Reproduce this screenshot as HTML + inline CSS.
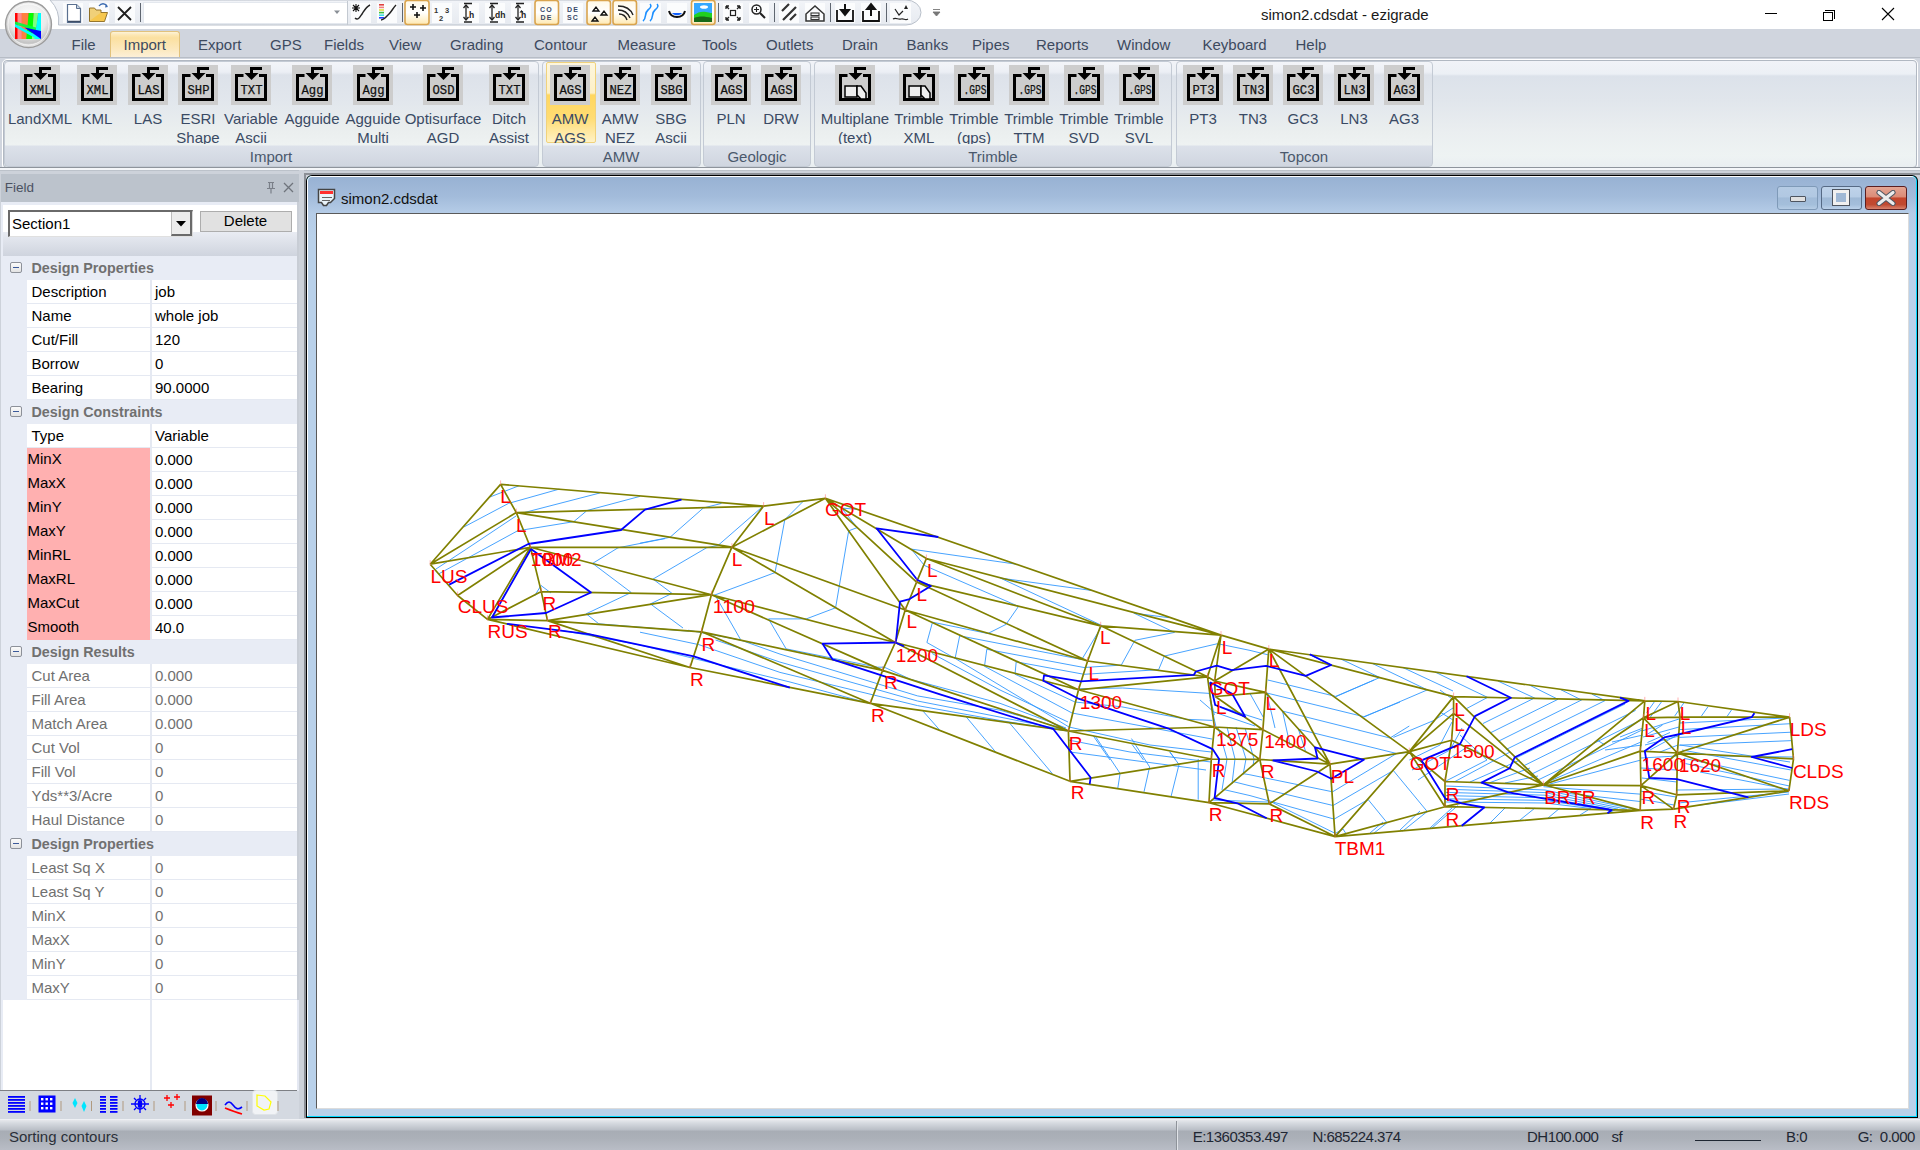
<!DOCTYPE html><html><head><meta charset="utf-8"><style>
*{margin:0;padding:0;box-sizing:border-box}
html,body{width:1920px;height:1150px;overflow:hidden;background:#cfd4dc;font-family:"Liberation Sans",sans-serif}
body{position:relative}
div,span,svg{position:absolute;display:block}
.t{white-space:nowrap;line-height:15px;font-size:15px}
.c{text-align:center}
</style></head><body>
<div style="left:0px;top:0px;width:1920px;height:29px;background:#fff"></div>
<span class="t" style="left:1261px;top:6.8px;color:#1a1a1a;">simon2.cdsdat - ezigrade</span>
<div style="left:1765px;top:13px;width:12px;height:1px;background:#000"></div>
<div style="left:1823px;top:12px;width:10px;height:9px;border:1px solid #000;background:#fff"></div>
<div style="left:1825px;top:10px;width:10px;height:9px;border-top:1px solid #000;border-right:1px solid #000"></div>
<svg style="left:1881px;top:7px" width="14" height="14"><path d="M1 1L13 13M13 1L1 13" stroke="#000" stroke-width="1.1"/></svg>
<div style="left:0px;top:29px;width:1920px;height:29px;background:#d0d5de"></div>
<div style="left:110px;top:31px;width:70px;height:27px;border:1px solid #e2c27c;border-bottom:none;border-radius:3px 3px 0 0;background:linear-gradient(#fdf3d9 0,#fce7b3 3px,#fbe0a0 6px,#fce9c0 18px,#fdf1dc 26px)"></div>
<span class="t" style="left:71.5px;top:37.3px;color:#3d4a5e;">File</span>
<span class="t" style="left:123.5px;top:37.3px;color:#3d4a5e;">Import</span>
<span class="t" style="left:198px;top:37.3px;color:#3d4a5e;">Export</span>
<span class="t" style="left:270px;top:37.3px;color:#3d4a5e;">GPS</span>
<span class="t" style="left:324px;top:37.3px;color:#3d4a5e;">Fields</span>
<span class="t" style="left:389px;top:37.3px;color:#3d4a5e;">View</span>
<span class="t" style="left:450px;top:37.3px;color:#3d4a5e;">Grading</span>
<span class="t" style="left:534px;top:37.3px;color:#3d4a5e;">Contour</span>
<span class="t" style="left:617.5px;top:37.3px;color:#3d4a5e;">Measure</span>
<span class="t" style="left:702px;top:37.3px;color:#3d4a5e;">Tools</span>
<span class="t" style="left:766px;top:37.3px;color:#3d4a5e;">Outlets</span>
<span class="t" style="left:842px;top:37.3px;color:#3d4a5e;">Drain</span>
<span class="t" style="left:906.5px;top:37.3px;color:#3d4a5e;">Banks</span>
<span class="t" style="left:972px;top:37.3px;color:#3d4a5e;">Pipes</span>
<span class="t" style="left:1036px;top:37.3px;color:#3d4a5e;">Reports</span>
<span class="t" style="left:1117px;top:37.3px;color:#3d4a5e;">Window</span>
<span class="t" style="left:1202.5px;top:37.3px;color:#3d4a5e;">Keyboard</span>
<span class="t" style="left:1295.5px;top:37.3px;color:#3d4a5e;">Help</span>
<div style="left:0px;top:57px;width:1920px;height:116px;background:#d0d5de"></div>
<div style="left:0px;top:57px;width:1920px;height:1px;background:#b7bdc6"></div>
<div style="left:2px;top:59px;width:1916px;height:111px;border:1px solid #fff;border-radius:5px;background:#e9edf3"></div>
<div style="left:3px;top:60px;width:1914px;height:108px;border:1px solid #b1b8c2;border-radius:4px;background:linear-gradient(#f1f3f8 0,#ecf0f5 13px,#dce2ea 15px,#e1e6ec 40px,#eaeef0 70px,#eef3f3 95px,#e9eef1 106px)"></div>
<div style="left:4px;top:61px;width:535px;height:106px;border:1px solid #c3cad4;border-radius:4px;background:linear-gradient(#f3f5f9 0,#eceff5 10px,#dde2ea 13px,#e2e7ed 40px,#ebefef 70px,#eef2f2 83px,#dce1ea 84px,#cfd5df 105px)"></div>
<span class="t c" style="left:211.0px;top:149px;width:120px;color:#4a586c;">Import</span>
<div style="left:542px;top:61px;width:159px;height:106px;border:1px solid #c3cad4;border-radius:4px;background:linear-gradient(#f3f5f9 0,#eceff5 10px,#dde2ea 13px,#e2e7ed 40px,#ebefef 70px,#eef2f2 83px,#dce1ea 84px,#cfd5df 105px)"></div>
<span class="t c" style="left:561.0px;top:149px;width:120px;color:#4a586c;">AMW</span>
<div style="left:703px;top:61px;width:108px;height:106px;border:1px solid #c3cad4;border-radius:4px;background:linear-gradient(#f3f5f9 0,#eceff5 10px,#dde2ea 13px,#e2e7ed 40px,#ebefef 70px,#eef2f2 83px,#dce1ea 84px,#cfd5df 105px)"></div>
<span class="t c" style="left:697.0px;top:149px;width:120px;color:#4a586c;">Geologic</span>
<div style="left:814px;top:61px;width:358px;height:106px;border:1px solid #c3cad4;border-radius:4px;background:linear-gradient(#f3f5f9 0,#eceff5 10px,#dde2ea 13px,#e2e7ed 40px,#ebefef 70px,#eef2f2 83px,#dce1ea 84px,#cfd5df 105px)"></div>
<span class="t c" style="left:933.0px;top:149px;width:120px;color:#4a586c;">Trimble</span>
<div style="left:1176px;top:61px;width:257px;height:106px;border:1px solid #c3cad4;border-radius:4px;background:linear-gradient(#f3f5f9 0,#eceff5 10px,#dde2ea 13px,#e2e7ed 40px,#ebefef 70px,#eef2f2 83px,#dce1ea 84px,#cfd5df 105px)"></div>
<span class="t c" style="left:1244.0px;top:149px;width:120px;color:#4a586c;">Topcon</span>
<div style="left:546px;top:62px;width:50px;height:81px;border:1px solid #f0d27c;border-radius:2px;background:linear-gradient(#fdf6de 0,#fdf0c6 30px,#ffd760 32px,#ffdc73 55px,#fff3c9 80px)"></div>
<svg style="left:20px;top:65px" width="40" height="40"><rect width="40" height="40" fill="#cdcdcd"/><path d="M12.5 10.5H5.5V34.5H34.5V10.5H28" fill="none" stroke="#000" stroke-width="3"/><path d="M31 3.5H20.5V9" fill="none" stroke="#000" stroke-width="3"/><path d="M13.5 8H27.5L20.5 15z" fill="#000"/><text x="9.5" y="28.5" font-family="Liberation Mono" font-size="13" textLength="22" lengthAdjust="spacingAndGlyphs" fill="#111" stroke="#111" stroke-width="0.25">XML</text></svg>
<span class="t c" style="left:-20.0px;top:111px;width:120px;color:#3a4a64;">LandXML</span>
<svg style="left:77px;top:65px" width="40" height="40"><rect width="40" height="40" fill="#cdcdcd"/><path d="M12.5 10.5H5.5V34.5H34.5V10.5H28" fill="none" stroke="#000" stroke-width="3"/><path d="M31 3.5H20.5V9" fill="none" stroke="#000" stroke-width="3"/><path d="M13.5 8H27.5L20.5 15z" fill="#000"/><text x="9.5" y="28.5" font-family="Liberation Mono" font-size="13" textLength="22" lengthAdjust="spacingAndGlyphs" fill="#111" stroke="#111" stroke-width="0.25">XML</text></svg>
<span class="t c" style="left:37.0px;top:111px;width:120px;color:#3a4a64;">KML</span>
<svg style="left:128px;top:65px" width="40" height="40"><rect width="40" height="40" fill="#cdcdcd"/><path d="M12.5 10.5H5.5V34.5H34.5V10.5H28" fill="none" stroke="#000" stroke-width="3"/><path d="M31 3.5H20.5V9" fill="none" stroke="#000" stroke-width="3"/><path d="M13.5 8H27.5L20.5 15z" fill="#000"/><text x="9.5" y="28.5" font-family="Liberation Mono" font-size="13" textLength="22" lengthAdjust="spacingAndGlyphs" fill="#111" stroke="#111" stroke-width="0.25">LAS</text></svg>
<span class="t c" style="left:88.0px;top:111px;width:120px;color:#3a4a64;">LAS</span>
<svg style="left:178px;top:65px" width="40" height="40"><rect width="40" height="40" fill="#cdcdcd"/><path d="M12.5 10.5H5.5V34.5H34.5V10.5H28" fill="none" stroke="#000" stroke-width="3"/><path d="M31 3.5H20.5V9" fill="none" stroke="#000" stroke-width="3"/><path d="M13.5 8H27.5L20.5 15z" fill="#000"/><text x="9.5" y="28.5" font-family="Liberation Mono" font-size="13" textLength="22" lengthAdjust="spacingAndGlyphs" fill="#111" stroke="#111" stroke-width="0.25">SHP</text></svg>
<span class="t c" style="left:138.0px;top:111px;width:120px;color:#3a4a64;">ESRI</span>
<div style="left:138px;top:125px;width:120px;height:19px;overflow:hidden"><span class="t c" style="left:0;top:5.3px;width:120px;color:#3a4a64">Shape</span></div>
<svg style="left:231px;top:65px" width="40" height="40"><rect width="40" height="40" fill="#cdcdcd"/><path d="M12.5 10.5H5.5V34.5H34.5V10.5H28" fill="none" stroke="#000" stroke-width="3"/><path d="M31 3.5H20.5V9" fill="none" stroke="#000" stroke-width="3"/><path d="M13.5 8H27.5L20.5 15z" fill="#000"/><text x="9.5" y="28.5" font-family="Liberation Mono" font-size="13" textLength="22" lengthAdjust="spacingAndGlyphs" fill="#111" stroke="#111" stroke-width="0.25">TXT</text></svg>
<span class="t c" style="left:191.0px;top:111px;width:120px;color:#3a4a64;">Variable</span>
<div style="left:191px;top:125px;width:120px;height:19px;overflow:hidden"><span class="t c" style="left:0;top:5.3px;width:120px;color:#3a4a64">Ascii</span></div>
<svg style="left:292px;top:65px" width="40" height="40"><rect width="40" height="40" fill="#cdcdcd"/><path d="M12.5 10.5H5.5V34.5H34.5V10.5H28" fill="none" stroke="#000" stroke-width="3"/><path d="M31 3.5H20.5V9" fill="none" stroke="#000" stroke-width="3"/><path d="M13.5 8H27.5L20.5 15z" fill="#000"/><text x="9.5" y="28.5" font-family="Liberation Mono" font-size="13" textLength="22" lengthAdjust="spacingAndGlyphs" fill="#111" stroke="#111" stroke-width="0.25">Agg</text></svg>
<span class="t c" style="left:252.0px;top:111px;width:120px;color:#3a4a64;">Agguide</span>
<svg style="left:353px;top:65px" width="40" height="40"><rect width="40" height="40" fill="#cdcdcd"/><path d="M12.5 10.5H5.5V34.5H34.5V10.5H28" fill="none" stroke="#000" stroke-width="3"/><path d="M31 3.5H20.5V9" fill="none" stroke="#000" stroke-width="3"/><path d="M13.5 8H27.5L20.5 15z" fill="#000"/><text x="9.5" y="28.5" font-family="Liberation Mono" font-size="13" textLength="22" lengthAdjust="spacingAndGlyphs" fill="#111" stroke="#111" stroke-width="0.25">Agg</text></svg>
<span class="t c" style="left:313.0px;top:111px;width:120px;color:#3a4a64;">Agguide</span>
<div style="left:313px;top:125px;width:120px;height:19px;overflow:hidden"><span class="t c" style="left:0;top:5.3px;width:120px;color:#3a4a64">Multi</span></div>
<svg style="left:423px;top:65px" width="40" height="40"><rect width="40" height="40" fill="#cdcdcd"/><path d="M12.5 10.5H5.5V34.5H34.5V10.5H28" fill="none" stroke="#000" stroke-width="3"/><path d="M31 3.5H20.5V9" fill="none" stroke="#000" stroke-width="3"/><path d="M13.5 8H27.5L20.5 15z" fill="#000"/><text x="9.5" y="28.5" font-family="Liberation Mono" font-size="13" textLength="22" lengthAdjust="spacingAndGlyphs" fill="#111" stroke="#111" stroke-width="0.25">OSD</text></svg>
<span class="t c" style="left:383.0px;top:111px;width:120px;color:#3a4a64;">Optisurface</span>
<div style="left:383px;top:125px;width:120px;height:19px;overflow:hidden"><span class="t c" style="left:0;top:5.3px;width:120px;color:#3a4a64">AGD</span></div>
<svg style="left:489px;top:65px" width="40" height="40"><rect width="40" height="40" fill="#cdcdcd"/><path d="M12.5 10.5H5.5V34.5H34.5V10.5H28" fill="none" stroke="#000" stroke-width="3"/><path d="M31 3.5H20.5V9" fill="none" stroke="#000" stroke-width="3"/><path d="M13.5 8H27.5L20.5 15z" fill="#000"/><text x="9.5" y="28.5" font-family="Liberation Mono" font-size="13" textLength="22" lengthAdjust="spacingAndGlyphs" fill="#111" stroke="#111" stroke-width="0.25">TXT</text></svg>
<span class="t c" style="left:449.0px;top:111px;width:120px;color:#3a4a64;">Ditch</span>
<div style="left:449px;top:125px;width:120px;height:19px;overflow:hidden"><span class="t c" style="left:0;top:5.3px;width:120px;color:#3a4a64">Assist</span></div>
<svg style="left:550px;top:65px" width="40" height="40"><rect width="40" height="40" fill="#cdcdcd"/><path d="M12.5 10.5H5.5V34.5H34.5V10.5H28" fill="none" stroke="#000" stroke-width="3"/><path d="M31 3.5H20.5V9" fill="none" stroke="#000" stroke-width="3"/><path d="M13.5 8H27.5L20.5 15z" fill="#000"/><text x="9.5" y="28.5" font-family="Liberation Mono" font-size="13" textLength="22" lengthAdjust="spacingAndGlyphs" fill="#111" stroke="#111" stroke-width="0.25">AGS</text></svg>
<span class="t c" style="left:510.0px;top:111px;width:120px;color:#3a4a64;">AMW</span>
<div style="left:510px;top:125px;width:120px;height:19px;overflow:hidden"><span class="t c" style="left:0;top:5.3px;width:120px;color:#3a4a64">AGS</span></div>
<svg style="left:600px;top:65px" width="40" height="40"><rect width="40" height="40" fill="#cdcdcd"/><path d="M12.5 10.5H5.5V34.5H34.5V10.5H28" fill="none" stroke="#000" stroke-width="3"/><path d="M31 3.5H20.5V9" fill="none" stroke="#000" stroke-width="3"/><path d="M13.5 8H27.5L20.5 15z" fill="#000"/><text x="9.5" y="28.5" font-family="Liberation Mono" font-size="13" textLength="22" lengthAdjust="spacingAndGlyphs" fill="#111" stroke="#111" stroke-width="0.25">NEZ</text></svg>
<span class="t c" style="left:560.0px;top:111px;width:120px;color:#3a4a64;">AMW</span>
<div style="left:560px;top:125px;width:120px;height:19px;overflow:hidden"><span class="t c" style="left:0;top:5.3px;width:120px;color:#3a4a64">NEZ</span></div>
<svg style="left:651px;top:65px" width="40" height="40"><rect width="40" height="40" fill="#cdcdcd"/><path d="M12.5 10.5H5.5V34.5H34.5V10.5H28" fill="none" stroke="#000" stroke-width="3"/><path d="M31 3.5H20.5V9" fill="none" stroke="#000" stroke-width="3"/><path d="M13.5 8H27.5L20.5 15z" fill="#000"/><text x="9.5" y="28.5" font-family="Liberation Mono" font-size="13" textLength="22" lengthAdjust="spacingAndGlyphs" fill="#111" stroke="#111" stroke-width="0.25">SBG</text></svg>
<span class="t c" style="left:611.0px;top:111px;width:120px;color:#3a4a64;">SBG</span>
<div style="left:611px;top:125px;width:120px;height:19px;overflow:hidden"><span class="t c" style="left:0;top:5.3px;width:120px;color:#3a4a64">Ascii</span></div>
<svg style="left:711px;top:65px" width="40" height="40"><rect width="40" height="40" fill="#cdcdcd"/><path d="M12.5 10.5H5.5V34.5H34.5V10.5H28" fill="none" stroke="#000" stroke-width="3"/><path d="M31 3.5H20.5V9" fill="none" stroke="#000" stroke-width="3"/><path d="M13.5 8H27.5L20.5 15z" fill="#000"/><text x="9.5" y="28.5" font-family="Liberation Mono" font-size="13" textLength="22" lengthAdjust="spacingAndGlyphs" fill="#111" stroke="#111" stroke-width="0.25">AGS</text></svg>
<span class="t c" style="left:671.0px;top:111px;width:120px;color:#3a4a64;">PLN</span>
<svg style="left:761px;top:65px" width="40" height="40"><rect width="40" height="40" fill="#cdcdcd"/><path d="M12.5 10.5H5.5V34.5H34.5V10.5H28" fill="none" stroke="#000" stroke-width="3"/><path d="M31 3.5H20.5V9" fill="none" stroke="#000" stroke-width="3"/><path d="M13.5 8H27.5L20.5 15z" fill="#000"/><text x="9.5" y="28.5" font-family="Liberation Mono" font-size="13" textLength="22" lengthAdjust="spacingAndGlyphs" fill="#111" stroke="#111" stroke-width="0.25">AGS</text></svg>
<span class="t c" style="left:721.0px;top:111px;width:120px;color:#3a4a64;">DRW</span>
<svg style="left:835px;top:65px" width="40" height="40"><rect width="40" height="40" fill="#cdcdcd"/><path d="M12.5 10.5H5.5V34.5H34.5V10.5H28" fill="none" stroke="#000" stroke-width="3"/><path d="M31 3.5H20.5V9" fill="none" stroke="#000" stroke-width="3"/><path d="M13.5 8H27.5L20.5 15z" fill="#000"/><path d="M10 21h12v11h-12z" fill="#eee" stroke="#000" stroke-width="1.5"/><path d="M22 21l4 0 5 7v6h-5l-4-4z" fill="#eee" stroke="#000" stroke-width="1.5"/></svg>
<span class="t c" style="left:795.0px;top:111px;width:120px;color:#3a4a64;">Multiplane</span>
<div style="left:795px;top:125px;width:120px;height:19px;overflow:hidden"><span class="t c" style="left:0;top:5.3px;width:120px;color:#3a4a64">(text)</span></div>
<svg style="left:899px;top:65px" width="40" height="40"><rect width="40" height="40" fill="#cdcdcd"/><path d="M12.5 10.5H5.5V34.5H34.5V10.5H28" fill="none" stroke="#000" stroke-width="3"/><path d="M31 3.5H20.5V9" fill="none" stroke="#000" stroke-width="3"/><path d="M13.5 8H27.5L20.5 15z" fill="#000"/><path d="M10 21h12v11h-12z" fill="#eee" stroke="#000" stroke-width="1.5"/><path d="M22 21l4 0 5 7v6h-5l-4-4z" fill="#eee" stroke="#000" stroke-width="1.5"/></svg>
<span class="t c" style="left:859.0px;top:111px;width:120px;color:#3a4a64;">Trimble</span>
<div style="left:859px;top:125px;width:120px;height:19px;overflow:hidden"><span class="t c" style="left:0;top:5.3px;width:120px;color:#3a4a64">XML</span></div>
<svg style="left:954px;top:65px" width="40" height="40"><rect width="40" height="40" fill="#cdcdcd"/><path d="M12.5 10.5H5.5V34.5H34.5V10.5H28" fill="none" stroke="#000" stroke-width="3"/><path d="M31 3.5H20.5V9" fill="none" stroke="#000" stroke-width="3"/><path d="M13.5 8H27.5L20.5 15z" fill="#000"/><text x="9.5" y="28.5" font-family="Liberation Mono" font-size="13" textLength="23" lengthAdjust="spacingAndGlyphs" fill="#111" stroke="#111" stroke-width="0.25">.GPS</text></svg>
<span class="t c" style="left:914.0px;top:111px;width:120px;color:#3a4a64;">Trimble</span>
<div style="left:914px;top:125px;width:120px;height:19px;overflow:hidden"><span class="t c" style="left:0;top:5.3px;width:120px;color:#3a4a64">(gps)</span></div>
<svg style="left:1009px;top:65px" width="40" height="40"><rect width="40" height="40" fill="#cdcdcd"/><path d="M12.5 10.5H5.5V34.5H34.5V10.5H28" fill="none" stroke="#000" stroke-width="3"/><path d="M31 3.5H20.5V9" fill="none" stroke="#000" stroke-width="3"/><path d="M13.5 8H27.5L20.5 15z" fill="#000"/><text x="9.5" y="28.5" font-family="Liberation Mono" font-size="13" textLength="23" lengthAdjust="spacingAndGlyphs" fill="#111" stroke="#111" stroke-width="0.25">.GPS</text></svg>
<span class="t c" style="left:969.0px;top:111px;width:120px;color:#3a4a64;">Trimble</span>
<div style="left:969px;top:125px;width:120px;height:19px;overflow:hidden"><span class="t c" style="left:0;top:5.3px;width:120px;color:#3a4a64">TTM</span></div>
<svg style="left:1064px;top:65px" width="40" height="40"><rect width="40" height="40" fill="#cdcdcd"/><path d="M12.5 10.5H5.5V34.5H34.5V10.5H28" fill="none" stroke="#000" stroke-width="3"/><path d="M31 3.5H20.5V9" fill="none" stroke="#000" stroke-width="3"/><path d="M13.5 8H27.5L20.5 15z" fill="#000"/><text x="9.5" y="28.5" font-family="Liberation Mono" font-size="13" textLength="23" lengthAdjust="spacingAndGlyphs" fill="#111" stroke="#111" stroke-width="0.25">.GPS</text></svg>
<span class="t c" style="left:1024.0px;top:111px;width:120px;color:#3a4a64;">Trimble</span>
<div style="left:1024px;top:125px;width:120px;height:19px;overflow:hidden"><span class="t c" style="left:0;top:5.3px;width:120px;color:#3a4a64">SVD</span></div>
<svg style="left:1119px;top:65px" width="40" height="40"><rect width="40" height="40" fill="#cdcdcd"/><path d="M12.5 10.5H5.5V34.5H34.5V10.5H28" fill="none" stroke="#000" stroke-width="3"/><path d="M31 3.5H20.5V9" fill="none" stroke="#000" stroke-width="3"/><path d="M13.5 8H27.5L20.5 15z" fill="#000"/><text x="9.5" y="28.5" font-family="Liberation Mono" font-size="13" textLength="23" lengthAdjust="spacingAndGlyphs" fill="#111" stroke="#111" stroke-width="0.25">.GPS</text></svg>
<span class="t c" style="left:1079.0px;top:111px;width:120px;color:#3a4a64;">Trimble</span>
<div style="left:1079px;top:125px;width:120px;height:19px;overflow:hidden"><span class="t c" style="left:0;top:5.3px;width:120px;color:#3a4a64">SVL</span></div>
<svg style="left:1183px;top:65px" width="40" height="40"><rect width="40" height="40" fill="#cdcdcd"/><path d="M12.5 10.5H5.5V34.5H34.5V10.5H28" fill="none" stroke="#000" stroke-width="3"/><path d="M31 3.5H20.5V9" fill="none" stroke="#000" stroke-width="3"/><path d="M13.5 8H27.5L20.5 15z" fill="#000"/><text x="9.5" y="28.5" font-family="Liberation Mono" font-size="13" textLength="22" lengthAdjust="spacingAndGlyphs" fill="#111" stroke="#111" stroke-width="0.25">PT3</text></svg>
<span class="t c" style="left:1143.0px;top:111px;width:120px;color:#3a4a64;">PT3</span>
<svg style="left:1233px;top:65px" width="40" height="40"><rect width="40" height="40" fill="#cdcdcd"/><path d="M12.5 10.5H5.5V34.5H34.5V10.5H28" fill="none" stroke="#000" stroke-width="3"/><path d="M31 3.5H20.5V9" fill="none" stroke="#000" stroke-width="3"/><path d="M13.5 8H27.5L20.5 15z" fill="#000"/><text x="9.5" y="28.5" font-family="Liberation Mono" font-size="13" textLength="22" lengthAdjust="spacingAndGlyphs" fill="#111" stroke="#111" stroke-width="0.25">TN3</text></svg>
<span class="t c" style="left:1193.0px;top:111px;width:120px;color:#3a4a64;">TN3</span>
<svg style="left:1283px;top:65px" width="40" height="40"><rect width="40" height="40" fill="#cdcdcd"/><path d="M12.5 10.5H5.5V34.5H34.5V10.5H28" fill="none" stroke="#000" stroke-width="3"/><path d="M31 3.5H20.5V9" fill="none" stroke="#000" stroke-width="3"/><path d="M13.5 8H27.5L20.5 15z" fill="#000"/><text x="9.5" y="28.5" font-family="Liberation Mono" font-size="13" textLength="22" lengthAdjust="spacingAndGlyphs" fill="#111" stroke="#111" stroke-width="0.25">GC3</text></svg>
<span class="t c" style="left:1243.0px;top:111px;width:120px;color:#3a4a64;">GC3</span>
<svg style="left:1334px;top:65px" width="40" height="40"><rect width="40" height="40" fill="#cdcdcd"/><path d="M12.5 10.5H5.5V34.5H34.5V10.5H28" fill="none" stroke="#000" stroke-width="3"/><path d="M31 3.5H20.5V9" fill="none" stroke="#000" stroke-width="3"/><path d="M13.5 8H27.5L20.5 15z" fill="#000"/><text x="9.5" y="28.5" font-family="Liberation Mono" font-size="13" textLength="22" lengthAdjust="spacingAndGlyphs" fill="#111" stroke="#111" stroke-width="0.25">LN3</text></svg>
<span class="t c" style="left:1294.0px;top:111px;width:120px;color:#3a4a64;">LN3</span>
<svg style="left:1384px;top:65px" width="40" height="40"><rect width="40" height="40" fill="#cdcdcd"/><path d="M12.5 10.5H5.5V34.5H34.5V10.5H28" fill="none" stroke="#000" stroke-width="3"/><path d="M31 3.5H20.5V9" fill="none" stroke="#000" stroke-width="3"/><path d="M13.5 8H27.5L20.5 15z" fill="#000"/><text x="9.5" y="28.5" font-family="Liberation Mono" font-size="13" textLength="22" lengthAdjust="spacingAndGlyphs" fill="#111" stroke="#111" stroke-width="0.25">AG3</text></svg>
<span class="t c" style="left:1344.0px;top:111px;width:120px;color:#3a4a64;">AG3</span>
<div style="left:0px;top:170px;width:1920px;height:950px;background:#cdd2da"></div>
<div style="left:0px;top:167px;width:1920px;height:1px;background:#8e949c"></div>
<div style="left:0px;top:168px;width:1920px;height:2px;background:#f4f6f9"></div>
<div style="left:0px;top:170px;width:1920px;height:1px;background:#bcc2ca"></div>
<div style="left:1px;top:174px;width:299px;height:28px;background:#bcc3cc;border-right:1px solid #e9ecf1"></div>
<span class="t" style="left:4.7px;top:179.6px;color:#4b5262;font-size:13.5px">Field</span>
<svg style="left:262px;top:180px" width="34" height="16"><path d="M6 2.5h6M7.5 2.5v6M10.5 2.5v6M5 8.5h8M9 8.5v5" stroke="#7a7f88" stroke-width="1.2" fill="none"/><path d="M22 3l9 9M31 3l-9 9" stroke="#6f747c" stroke-width="1.3"/></svg>
<div style="left:1px;top:202px;width:298px;height:888px;background:#e8ecf5;border-right:1px solid #c5cad3"></div>
<div style="left:3px;top:204.5px;width:294px;height:28px;background:#fff"></div>
<div style="left:3px;top:232px;width:294px;height:24px;background:linear-gradient(#e9ecf3,#cfd4de)"></div>
<div style="left:8px;top:210px;width:185px;height:27px;background:#fff;border-top:2px solid #6a6a6a;border-left:2px solid #6a6a6a;border-right:1px solid #d8d8d8;border-bottom:1px solid #e0e0e0"></div>
<span class="t" style="left:12px;top:216px;color:#000;">Section1</span>
<div style="left:171px;top:212px;width:21px;height:24px;background:#ececec;border-left:1px solid #bcbcbc;border-right:2px solid #6a6a6a;border-bottom:2px solid #6a6a6a"></div>
<svg style="left:175px;top:220px" width="12" height="8"><path d="M1 1h10L6 6.5z" fill="#000"/></svg>
<div style="left:199.5px;top:210.5px;width:92px;height:21px;background:#e1e1e1;border:1px solid #adadad"></div>
<span class="t c" style="left:185.5px;top:213.2px;width:120px;color:#000;">Delete</span>
<div style="left:3px;top:256px;width:294px;height:24px;background:#e8ecf5"></div>
<div style="left:10px;top:262px;width:12px;height:11px;border:1px solid #8d9199;border-radius:2px;background:linear-gradient(#fbfbfb,#e3e3e3)"></div>
<div style="left:13px;top:267px;width:6px;height:1.2px;background:#3c5a9a"></div>
<span class="t" style="left:31.5px;top:260.6px;color:#707070;font-weight:bold;font-size:14.3px">Design Properties</span>
<div style="left:27px;top:280px;width:270px;height:24px;background:#fff;border-bottom:1px solid #e5e9f2"></div>
<div style="left:150px;top:280px;width:2px;height:24px;background:#e5e9f2"></div>
<span class="t" style="left:31.5px;top:284.3px;color:#000;">Description</span>
<span class="t" style="left:155px;top:284.3px;color:#000;">job</span>
<div style="left:27px;top:304px;width:270px;height:24px;background:#fff;border-bottom:1px solid #e5e9f2"></div>
<div style="left:150px;top:304px;width:2px;height:24px;background:#e5e9f2"></div>
<span class="t" style="left:31.5px;top:308.3px;color:#000;">Name</span>
<span class="t" style="left:155px;top:308.3px;color:#000;">whole job</span>
<div style="left:27px;top:328px;width:270px;height:24px;background:#fff;border-bottom:1px solid #e5e9f2"></div>
<div style="left:150px;top:328px;width:2px;height:24px;background:#e5e9f2"></div>
<span class="t" style="left:31.5px;top:332.3px;color:#000;">Cut/Fill</span>
<span class="t" style="left:155px;top:332.3px;color:#000;">120</span>
<div style="left:27px;top:352px;width:270px;height:24px;background:#fff;border-bottom:1px solid #e5e9f2"></div>
<div style="left:150px;top:352px;width:2px;height:24px;background:#e5e9f2"></div>
<span class="t" style="left:31.5px;top:356.3px;color:#000;">Borrow</span>
<span class="t" style="left:155px;top:356.3px;color:#000;">0</span>
<div style="left:27px;top:376px;width:270px;height:24px;background:#fff;border-bottom:1px solid #e5e9f2"></div>
<div style="left:150px;top:376px;width:2px;height:24px;background:#e5e9f2"></div>
<span class="t" style="left:31.5px;top:380.3px;color:#000;">Bearing</span>
<span class="t" style="left:155px;top:380.3px;color:#000;">90.0000</span>
<div style="left:3px;top:400px;width:294px;height:24px;background:#e8ecf5"></div>
<div style="left:10px;top:406px;width:12px;height:11px;border:1px solid #8d9199;border-radius:2px;background:linear-gradient(#fbfbfb,#e3e3e3)"></div>
<div style="left:13px;top:411px;width:6px;height:1.2px;background:#3c5a9a"></div>
<span class="t" style="left:31.5px;top:404.6px;color:#707070;font-weight:bold;font-size:14.3px">Design Constraints</span>
<div style="left:27px;top:424px;width:270px;height:24px;background:#fff;border-bottom:1px solid #e5e9f2"></div>
<div style="left:150px;top:424px;width:2px;height:24px;background:#e5e9f2"></div>
<span class="t" style="left:31.5px;top:428.3px;color:#000;">Type</span>
<span class="t" style="left:155px;top:428.3px;color:#000;">Variable</span>
<div style="left:27px;top:448px;width:270px;height:24px;background:#fff;border-bottom:1px solid #e5e9f2"></div>
<div style="left:150px;top:448px;width:2px;height:24px;background:#e5e9f2"></div>
<div style="left:27px;top:448px;width:123px;height:24px;background:#ffb0b0"></div>
<span class="t" style="left:27.5px;top:450.7px;color:#000;">MinX</span>
<span class="t" style="left:155px;top:452.3px;color:#000;">0.000</span>
<div style="left:27px;top:472px;width:270px;height:24px;background:#fff;border-bottom:1px solid #e5e9f2"></div>
<div style="left:150px;top:472px;width:2px;height:24px;background:#e5e9f2"></div>
<div style="left:27px;top:472px;width:123px;height:24px;background:#ffb0b0"></div>
<span class="t" style="left:27.5px;top:474.7px;color:#000;">MaxX</span>
<span class="t" style="left:155px;top:476.3px;color:#000;">0.000</span>
<div style="left:27px;top:496px;width:270px;height:24px;background:#fff;border-bottom:1px solid #e5e9f2"></div>
<div style="left:150px;top:496px;width:2px;height:24px;background:#e5e9f2"></div>
<div style="left:27px;top:496px;width:123px;height:24px;background:#ffb0b0"></div>
<span class="t" style="left:27.5px;top:498.7px;color:#000;">MinY</span>
<span class="t" style="left:155px;top:500.3px;color:#000;">0.000</span>
<div style="left:27px;top:520px;width:270px;height:24px;background:#fff;border-bottom:1px solid #e5e9f2"></div>
<div style="left:150px;top:520px;width:2px;height:24px;background:#e5e9f2"></div>
<div style="left:27px;top:520px;width:123px;height:24px;background:#ffb0b0"></div>
<span class="t" style="left:27.5px;top:522.7px;color:#000;">MaxY</span>
<span class="t" style="left:155px;top:524.3px;color:#000;">0.000</span>
<div style="left:27px;top:544px;width:270px;height:24px;background:#fff;border-bottom:1px solid #e5e9f2"></div>
<div style="left:150px;top:544px;width:2px;height:24px;background:#e5e9f2"></div>
<div style="left:27px;top:544px;width:123px;height:24px;background:#ffb0b0"></div>
<span class="t" style="left:27.5px;top:546.7px;color:#000;">MinRL</span>
<span class="t" style="left:155px;top:548.3px;color:#000;">0.000</span>
<div style="left:27px;top:568px;width:270px;height:24px;background:#fff;border-bottom:1px solid #e5e9f2"></div>
<div style="left:150px;top:568px;width:2px;height:24px;background:#e5e9f2"></div>
<div style="left:27px;top:568px;width:123px;height:24px;background:#ffb0b0"></div>
<span class="t" style="left:27.5px;top:570.7px;color:#000;">MaxRL</span>
<span class="t" style="left:155px;top:572.3px;color:#000;">0.000</span>
<div style="left:27px;top:592px;width:270px;height:24px;background:#fff;border-bottom:1px solid #e5e9f2"></div>
<div style="left:150px;top:592px;width:2px;height:24px;background:#e5e9f2"></div>
<div style="left:27px;top:592px;width:123px;height:24px;background:#ffb0b0"></div>
<span class="t" style="left:27.5px;top:594.7px;color:#000;">MaxCut</span>
<span class="t" style="left:155px;top:596.3px;color:#000;">0.000</span>
<div style="left:27px;top:616px;width:270px;height:24px;background:#fff;border-bottom:1px solid #e5e9f2"></div>
<div style="left:150px;top:616px;width:2px;height:24px;background:#e5e9f2"></div>
<div style="left:27px;top:616px;width:123px;height:24px;background:#ffb0b0"></div>
<span class="t" style="left:27.5px;top:618.7px;color:#000;">Smooth</span>
<span class="t" style="left:155px;top:620.3px;color:#000;">40.0</span>
<div style="left:3px;top:640px;width:294px;height:24px;background:#e8ecf5"></div>
<div style="left:10px;top:646px;width:12px;height:11px;border:1px solid #8d9199;border-radius:2px;background:linear-gradient(#fbfbfb,#e3e3e3)"></div>
<div style="left:13px;top:651px;width:6px;height:1.2px;background:#3c5a9a"></div>
<span class="t" style="left:31.5px;top:644.6px;color:#707070;font-weight:bold;font-size:14.3px">Design Results</span>
<div style="left:27px;top:664px;width:270px;height:24px;background:#fff;border-bottom:1px solid #e5e9f2"></div>
<div style="left:150px;top:664px;width:2px;height:24px;background:#e5e9f2"></div>
<span class="t" style="left:31.5px;top:668.3px;color:#707070;">Cut Area</span>
<span class="t" style="left:155px;top:668.3px;color:#707070;">0.000</span>
<div style="left:27px;top:688px;width:270px;height:24px;background:#fff;border-bottom:1px solid #e5e9f2"></div>
<div style="left:150px;top:688px;width:2px;height:24px;background:#e5e9f2"></div>
<span class="t" style="left:31.5px;top:692.3px;color:#707070;">Fill Area</span>
<span class="t" style="left:155px;top:692.3px;color:#707070;">0.000</span>
<div style="left:27px;top:712px;width:270px;height:24px;background:#fff;border-bottom:1px solid #e5e9f2"></div>
<div style="left:150px;top:712px;width:2px;height:24px;background:#e5e9f2"></div>
<span class="t" style="left:31.5px;top:716.3px;color:#707070;">Match Area</span>
<span class="t" style="left:155px;top:716.3px;color:#707070;">0.000</span>
<div style="left:27px;top:736px;width:270px;height:24px;background:#fff;border-bottom:1px solid #e5e9f2"></div>
<div style="left:150px;top:736px;width:2px;height:24px;background:#e5e9f2"></div>
<span class="t" style="left:31.5px;top:740.3px;color:#707070;">Cut Vol</span>
<span class="t" style="left:155px;top:740.3px;color:#707070;">0</span>
<div style="left:27px;top:760px;width:270px;height:24px;background:#fff;border-bottom:1px solid #e5e9f2"></div>
<div style="left:150px;top:760px;width:2px;height:24px;background:#e5e9f2"></div>
<span class="t" style="left:31.5px;top:764.3px;color:#707070;">Fill Vol</span>
<span class="t" style="left:155px;top:764.3px;color:#707070;">0</span>
<div style="left:27px;top:784px;width:270px;height:24px;background:#fff;border-bottom:1px solid #e5e9f2"></div>
<div style="left:150px;top:784px;width:2px;height:24px;background:#e5e9f2"></div>
<span class="t" style="left:31.5px;top:788.3px;color:#707070;">Yds**3/Acre</span>
<span class="t" style="left:155px;top:788.3px;color:#707070;">0</span>
<div style="left:27px;top:808px;width:270px;height:24px;background:#fff;border-bottom:1px solid #e5e9f2"></div>
<div style="left:150px;top:808px;width:2px;height:24px;background:#e5e9f2"></div>
<span class="t" style="left:31.5px;top:812.3px;color:#707070;">Haul Distance</span>
<span class="t" style="left:155px;top:812.3px;color:#707070;">0</span>
<div style="left:3px;top:832px;width:294px;height:24px;background:#e8ecf5"></div>
<div style="left:10px;top:838px;width:12px;height:11px;border:1px solid #8d9199;border-radius:2px;background:linear-gradient(#fbfbfb,#e3e3e3)"></div>
<div style="left:13px;top:843px;width:6px;height:1.2px;background:#3c5a9a"></div>
<span class="t" style="left:31.5px;top:836.6px;color:#707070;font-weight:bold;font-size:14.3px">Design Properties</span>
<div style="left:27px;top:856px;width:270px;height:24px;background:#fff;border-bottom:1px solid #e5e9f2"></div>
<div style="left:150px;top:856px;width:2px;height:24px;background:#e5e9f2"></div>
<span class="t" style="left:31.5px;top:860.3px;color:#707070;">Least Sq X</span>
<span class="t" style="left:155px;top:860.3px;color:#707070;">0</span>
<div style="left:27px;top:880px;width:270px;height:24px;background:#fff;border-bottom:1px solid #e5e9f2"></div>
<div style="left:150px;top:880px;width:2px;height:24px;background:#e5e9f2"></div>
<span class="t" style="left:31.5px;top:884.3px;color:#707070;">Least Sq Y</span>
<span class="t" style="left:155px;top:884.3px;color:#707070;">0</span>
<div style="left:27px;top:904px;width:270px;height:24px;background:#fff;border-bottom:1px solid #e5e9f2"></div>
<div style="left:150px;top:904px;width:2px;height:24px;background:#e5e9f2"></div>
<span class="t" style="left:31.5px;top:908.3px;color:#707070;">MinX</span>
<span class="t" style="left:155px;top:908.3px;color:#707070;">0</span>
<div style="left:27px;top:928px;width:270px;height:24px;background:#fff;border-bottom:1px solid #e5e9f2"></div>
<div style="left:150px;top:928px;width:2px;height:24px;background:#e5e9f2"></div>
<span class="t" style="left:31.5px;top:932.3px;color:#707070;">MaxX</span>
<span class="t" style="left:155px;top:932.3px;color:#707070;">0</span>
<div style="left:27px;top:952px;width:270px;height:24px;background:#fff;border-bottom:1px solid #e5e9f2"></div>
<div style="left:150px;top:952px;width:2px;height:24px;background:#e5e9f2"></div>
<span class="t" style="left:31.5px;top:956.3px;color:#707070;">MinY</span>
<span class="t" style="left:155px;top:956.3px;color:#707070;">0</span>
<div style="left:27px;top:976px;width:270px;height:24px;background:#fff;border-bottom:1px solid #e5e9f2"></div>
<div style="left:150px;top:976px;width:2px;height:24px;background:#e5e9f2"></div>
<span class="t" style="left:31.5px;top:980.3px;color:#707070;">MaxY</span>
<span class="t" style="left:155px;top:980.3px;color:#707070;">0</span>
<div style="left:3px;top:1000px;width:294px;height:90px;background:#fff"></div>
<div style="left:150px;top:1000px;width:1.5px;height:90px;background:#e5e9f2"></div>
<div style="left:297px;top:202px;width:2px;height:888px;background:#c8cdd5"></div>
<div style="left:0px;top:1090px;width:304px;height:30px;background:#d4d9e1"></div>
<div style="left:0px;top:1090px;width:298px;height:1.2px;background:#7d7f84"></div>
<div style="left:297px;top:1000px;width:3px;height:91px;background:#e4e8f2"></div>
<svg style="left:0;top:1090px" width="300" height="30"><g fill="#0000ff"><rect x="8" y="6" width="17" height="1.8"/><rect x="8" y="9" width="17" height="1.8"/><rect x="8" y="12" width="17" height="1.8"/><rect x="8" y="15" width="17" height="1.8"/><rect x="8" y="18" width="17" height="1.8"/><rect x="8" y="21" width="17" height="1.8"/></g><rect x="38.5" y="5.5" width="17" height="17" fill="#0000ff"/><rect x="41.0" y="8.0" width="2.4" height="2.4" fill="#fff"/><rect x="41.0" y="12.5" width="2.4" height="2.4" fill="#fff"/><rect x="41.0" y="17.0" width="2.4" height="2.4" fill="#fff"/><rect x="45.5" y="8.0" width="2.4" height="2.4" fill="#fff"/><rect x="45.5" y="12.5" width="2.4" height="2.4" fill="#fff"/><rect x="45.5" y="17.0" width="2.4" height="2.4" fill="#fff"/><rect x="50.0" y="8.0" width="2.4" height="2.4" fill="#fff"/><rect x="50.0" y="12.5" width="2.4" height="2.4" fill="#fff"/><rect x="50.0" y="17.0" width="2.4" height="2.4" fill="#fff"/><path d="M75 8l2.5 5-2.5 5-2.5-5z M84 11l2.5 5-2.5 6-2.5-6z" fill="#00e5ff"/><g fill="#0000ff"><rect x="100" y="6" width="6" height="1.8"/><rect x="110" y="6" width="7.5" height="1.8"/><rect x="100" y="9" width="6" height="1.8"/><rect x="110" y="9" width="7.5" height="1.8"/><rect x="100" y="12" width="6" height="1.8"/><rect x="110" y="12" width="7.5" height="1.8"/><rect x="100" y="15" width="6" height="1.8"/><rect x="110" y="15" width="7.5" height="1.8"/><rect x="100" y="18" width="6" height="1.8"/><rect x="110" y="18" width="7.5" height="1.8"/><rect x="100" y="21" width="6" height="1.8"/><rect x="110" y="21" width="7.5" height="1.8"/></g><g stroke="#0000ff" stroke-width="1.3" fill="none"><circle cx="140" cy="14" r="5"/><path d="M140 5v18M131 14h18M134 8l2 2M146 8l-2 2M134 20l2-2M146 20l-2-2"/><rect x="138.5" y="11" width="3" height="6" fill="#0000ff"/></g><g stroke="#ff0000" stroke-width="1.3"><path d="M164 8h6M167 5v6M174 7h6M177 4v6M168 15h6M171 12v6"/></g><rect x="192" y="5.5" width="20" height="20" fill="#800000"/><circle cx="202" cy="15" r="6" fill="#00e5ff" stroke="#fff" stroke-width="1.2"/><path d="M196 14a6 6 0 0 1 12 0z" fill="#000080"/><path d="M225 15c3-4 5-4 8 0s5 5 9 2" stroke="#0000ff" stroke-width="1.6" fill="none"/><path d="M225 18c5 2 10 4 17 6" stroke="#ff0000" stroke-width="1.6" fill="none"/><rect x="252.5" y="0.5" width="25" height="24" rx="3" fill="#f1f3f6" stroke="#dfe3e8"/><path d="M257 5l8 1 6 6-2 7-5 1-7-4z" fill="none" stroke="#ffff00" stroke-width="1.2"/><g fill="#b09a80"><rect x="29.5" y="11" width="1" height="10"/><rect x="60.5" y="11" width="1" height="10"/><rect x="91" y="11" width="1" height="10"/><rect x="122.5" y="11" width="1" height="10"/><rect x="153.5" y="11" width="1" height="10"/><rect x="184.5" y="11" width="1" height="10"/><rect x="215.5" y="11" width="1" height="10"/><rect x="246.5" y="11" width="1" height="10"/><rect x="277.5" y="11" width="1" height="10"/></g></svg>
<div style="left:299px;top:170px;width:5px;height:950px;background:#cdd2da"></div>
<div style="left:304px;top:173px;width:1616px;height:947px;background:#cdd2da"></div>
<div style="left:304px;top:173px;width:1.5px;height:945px;background:#8b8f96"></div>
<div style="left:304px;top:173px;width:1616px;height:1.5px;background:#8b8f96"></div>
<div style="left:306px;top:175px;width:1612px;height:943px;background:#000;border-radius:6px 6px 0 0"></div>
<div style="left:307px;top:176px;width:1610px;height:941px;background:#00d8ff;border-radius:5px 5px 0 0"></div>
<div style="left:307px;top:176px;width:1609px;height:940px;background:#fff;border-radius:5px 5px 0 0"></div>
<div style="left:308px;top:177px;width:1608px;height:939px;background:linear-gradient(#98b2d3 0,#a3bcdb 20px,#b5cce7 36px,#b9d1ea 60px);border-radius:4px 4px 0 0"></div>
<svg style="left:317px;top:188px" width="20" height="20"><path d="M1.5 1.5h16v9l-4 4h-2l-2 3h-3l-2-3h-3z" fill="#eaf4fb" stroke="#444" stroke-width="1.5"/><path d="M3 3h13v3H3z" fill="#ff3030"/><path d="M5 9.5h10M5 12.5h8" stroke="#666"/></svg>
<span class="t" style="left:341px;top:191.3px;color:#111;">simon2.cdsdat</span>
<div style="left:1777px;top:186px;width:41px;height:23.5px;border:1px solid #7f9ab8;border-radius:3px;background:linear-gradient(#b5cbe4 0,#b1c8e2 45%,#a1bbd8 50%,#a4bfdb 80%,#b6cde6 100%)"></div>
<div style="left:1789.5px;top:196px;width:16.5px;height:5.5px;background:#e0e0e0;border:1px solid #4e5560;border-radius:1px"></div>
<div style="left:1821px;top:186px;width:41px;height:23.5px;border:1px solid #566a85;border-radius:3px;background:linear-gradient(#bfd3ea 0,#b7cde6 45%,#9fb9d6 50%,#a4bedb 80%,#bcd2ea 100%)"></div>
<div style="left:1833px;top:190px;width:16px;height:14.5px;border:3.5px solid #f0f0f0;outline:1px solid #4e5560;background:#9fb8d5"></div>
<div style="left:1865px;top:186px;width:42px;height:23.5px;border:1px solid #5a1e20;border-radius:3px;background:linear-gradient(#e4a593 0,#db8b77 45%,#c4452c 50%,#c04a31 80%,#d8836d 100%)"></div>
<svg style="left:1875px;top:190px" width="22" height="16"><path d="M4 2.5l14 11M18 2.5l-14 11" stroke="#4e5560" stroke-width="5.2" stroke-linecap="round"/><path d="M4 2.5l14 11M18 2.5l-14 11" stroke="#ececec" stroke-width="3.2" stroke-linecap="round"/></svg>
<div style="left:315.5px;top:213px;width:1593px;height:896px;background:#fff;border-top:1.5px solid #5a5a5a;border-left:1.5px solid #5a5a5a;border-right:1px solid #dcdcdc;border-bottom:1px solid #dcdcdc"></div>
<div style="left:0px;top:1119px;width:1920px;height:1px;background:#eef0f4"></div>
<div style="left:0px;top:1120px;width:1920px;height:30px;background:linear-gradient(#e6e8ec 0,#d6dae0 3px,#b9bec6 10px,#a8adb5 11px,#abb0b8 18px,#b9bdc6 30px)"></div>
<div style="left:1176px;top:1121px;width:1.5px;height:29px;background:#8e939a;border-right:1px solid #e0e3e8"></div>
<span class="t" style="left:9px;top:1129.3px;color:#2a2f38;">Sorting contours</span>
<span class="t" style="left:1192.7px;top:1129.3px;color:#1f2733;letter-spacing:-0.5px">E:1360353.497</span>
<span class="t" style="left:1312.4px;top:1129.3px;color:#1f2733;letter-spacing:-0.5px">N:685224.374</span>
<span class="t" style="left:1527px;top:1129.3px;color:#1f2733;letter-spacing:-0.5px">DH100.000</span>
<span class="t" style="left:1611.5px;top:1129.3px;color:#1f2733;letter-spacing:-0.5px">sf</span>
<span class="t" style="left:1786px;top:1129.3px;color:#1f2733;letter-spacing:-0.5px">B:0</span>
<span class="t" style="left:1857.7px;top:1129.3px;color:#1f2733;letter-spacing:-0.5px">G:&nbsp; 0.000</span>
<div style="left:1695px;top:1140px;width:66px;height:1px;background:#1f2733"></div>
<svg style="left:316px;top:214px" width="1592" height="894" viewBox="0 0 1592 894" font-family="Liberation Sans"><path d="M174.2 282.9L202.9 271.8M148.1 312.9L192.5 289.4L243.3 275.1M120.0 355.0L149.0 336.0L200.0 302.0M208.1 298.6L283.8 279.0M270.7 296.6L324.2 282.3M122.7 359.9L201.6 316.8L257.7 307.7L270.1 297.3M276.6 349.4L302.0 333.8L349.0 324.6M276.6 349.4L315.2 378.5L270.2 399.8L282.8 409.8L372.8 417.2M218.5 382.0L225.0 371.5L235.0 379.0M337.0 365.1L356.0 379.4L334.4 389.9L367.0 414.0M324.0 329.2L354.0 323.3L387.3 294.0L405.5 289.4M337.0 365.1L390.5 333.8L402.3 331.2L447.3 292.0M487.0 287.5L468.8 305.7L459.0 358.6L397.7 381.4M525.5 294.0L540.5 295.3M525.5 294.0L541.2 313.6L532.7 316.8L519.6 393.8L490.3 404.9L452.5 404.9L470.7 435.8M399.6 382.0L424.4 425.3M470.3 434.9L561.4 453.2L568.3 453.2L594.6 465.3L684.0 489.3L750.0 514.0M372.3 416.2L424.4 426.0L464.0 440.1L601.5 481.9L684.0 496.2L751.0 515.5M399.6 426.0L464.0 448.1L601.5 487.0L684.0 503.1L751.0 516.5M324.0 418.2L382.7 430.6L464.0 458.4L601.5 491.6L684.0 506.5L751.0 517.0M244.0 416.0L324.0 431.0L384.0 446.0L474.0 468.0L552.0 489.0M616.2 439.5L684.0 476.0L752.0 508.0M606.4 496.4L623.3 515.6M650.4 503.1L679.8 538.2M693.4 508.8L736.4 559.7M595.3 335.1L699.6 350.1M595.3 335.1L608.3 351.4L702.5 392.4L690.0 410.4L671.9 419.5L616.5 408.2L610.9 428.5M684.4 364.1L776.0 376.5M684.4 364.1L786.1 411.6L765.8 445.5M643.7 421.8L765.8 445.5M643.7 421.8L639.1 444.4M670.8 435.3L768.0 453.5L805.3 451.1M670.8 435.3L668.5 452.3M700.2 447.8L768.0 460.3L842.6 455.7M700.2 447.8L699.0 460.2M817.8 399.1L852.8 403.7M817.8 399.1L858.5 418.4L818.9 426.3L805.3 451.1M848.3 442.1L901.5 429.7L934.0 436.4L952.8 441.0M848.3 442.1L842.6 455.7M756.7 474.9L806.6 474.0L893.5 479.4M639.1 444.4L753.0 513.0M668.5 452.3L756.0 499.0M699.0 460.2L759.0 488.0M610.9 428.5L639.0 444.4M759.0 488.0L805.6 492.8L870.3 505.3L896.4 506.4M756.0 499.0L896.4 525.1M753.0 513.0L834.0 531.0L895.3 538.0M752.4 526.0L814.0 538.0L895.0 548.0M754.0 538.0L890.0 556.0M777.4 522.0L794.0 546.0M816.0 530.4L827.5 546.0M853.6 537.7L859.8 546.0M779.2 522.1L804.1 559.4L801.8 574.1M815.5 524.6L833.6 552.9L828.0 577.8M854.0 538.2L863.0 550.6L855.1 582.3M882.2 545.0L882.2 585.7M898.4 501.1L893.2 479.7M933.7 479.0L947.3 503.3M899.0 491.0L946.0 506.0M884.0 486.0L898.0 498.0L939.0 512.0M911.0 513.0L919.0 545.0L916.0 570.0M920.0 513.0L930.0 545.0L927.0 561.0M929.0 514.0L938.0 545.0L937.0 552.0M902.0 513.0L911.0 545.0L906.0 576.0M894.0 486.0L900.0 513.0M951.8 466.0L1019.7 482.4L1058.1 466.0M950.7 479.0L1047.9 502.7L1084.0 488.0M966.5 497.1L1074.0 524.0L1093.3 512.0M982.4 515.2L1080.7 539.5M966.5 497.1L974.0 531.0M982.4 515.2L989.8 538.0M950.7 479.0L959.0 514.0M908.3 575.7L934.0 581.6L1018.2 605.1L1052.1 585.5L1071.3 609.0M918.0 567.8L934.0 571.8L1017.1 591.5L1077.3 556.5L1111.2 597.5M928.0 559.8L934.0 560.8L1016.6 577.8L1080.6 539.5M896.0 586.0L955.9 588.2L1019.3 619.4L1027.0 615.0L1030.2 620.0M1057.6 619.4L1070.7 609.0M1086.6 617.2L1111.2 597.5M1115.6 614.4L1141.8 591.5M1080.6 539.5L1096.0 538.0M994.0 440.8L1014.0 450.5M1025.0 445.1L1063.8 463.5M1056.0 449.3L1111.3 475.9M1087.0 453.6L1137.0 477.0M1119.0 458.0L1154.0 475.0L1171.6 483.4M1182.0 467.1L1218.5 484.0M1213.3 471.0L1242.0 485.3M1244.6 475.6L1265.5 486.0M1275.9 480.1L1289.0 486.6M1019.7 482.7L1063.8 463.5M1048.0 503.0L1111.3 475.9M1077.4 523.4L1118.0 506.4L1137.0 494.0M1150.7 494.5L1171.6 483.4M1167.0 509.5L1218.5 484.0M1174.9 518.6L1242.0 485.3M1182.7 527.1L1265.5 486.0M1189.9 535.6L1289.0 486.6M1200.0 544.0L1309.0 490.0M1207.5 551.9L1319.6 496.4M1215.3 560.3L1325.0 506.0M1222.0 566.0L1326.0 516.0M1229.0 569.0L1325.0 528.0M1234.0 570.0L1325.0 546.0M1281.0 526.0L1289.0 531.0M1129.0 567.5L1171.0 546.0L1144.0 521.0M1139.0 567.5L1194.0 538.0M1154.0 568.0L1204.0 546.0M1174.0 568.6L1214.0 554.0M1189.0 569.0L1222.0 562.0M1093.3 546.0L1124.0 531.0L1136.0 508.0M1096.0 556.0L1134.0 536.0L1146.0 514.0M1102.0 566.0L1154.0 531.0M1124.0 476.0L1137.6 486.0M1124.0 498.0L1137.0 506.0M1130.0 572.0L1229.0 576.0L1320.0 595.5M1130.0 575.2L1229.0 578.6L1311.0 595.3M1130.0 578.4L1229.0 581.2L1302.0 595.1M1130.0 581.6L1229.0 583.8L1293.0 594.9M1130.0 584.8L1229.0 586.4L1284.0 594.7M1130.0 588.0L1229.0 589.0L1275.0 594.5M1227.5 572.7L1325.0 580.2M1253.0 579.5L1325.0 587.6M1054.0 619.0L1067.0 608.0M1084.0 616.0L1104.0 597.0M1114.0 614.0L1136.0 594.0M1174.0 609.0L1189.0 594.0M1204.0 606.0L1219.0 594.0M1232.0 604.0L1244.0 594.0M1264.0 601.0L1272.0 596.0M1294.0 598.0L1299.0 596.0M1330.7 498.6L1338.6 487.5M1358.8 501.9L1367.9 488.8M1385.5 501.9L1392.0 492.7M1411.0 502.5L1415.5 496.0M1436.0 502.8L1439.0 499.0M1346.0 487.2L1334.0 503.5M1364.0 509.0L1473.6 503.8M1363.6 515.6L1474.5 509.7M1363.3 523.4L1475.5 518.2M1363.0 531.2L1476.2 526.6M1367.9 544.3L1473.6 566.4M1369.2 549.5L1473.4 572.0M1384.0 558.0L1473.0 575.5M1404.0 542.0L1477.0 543.0M1327.0 523.0L1363.0 513.0M1329.0 531.0L1363.0 522.0M1326.0 517.0L1363.0 505.0M1304.0 523.0L1327.0 514.0M1296.0 528.0L1327.0 521.0M1289.0 536.0L1326.0 531.0M1325.0 544.0L1361.0 542.0M1325.0 554.0L1361.0 556.0M1326.0 564.0L1361.0 568.0M1324.0 577.0L1360.0 583.0M1324.0 585.0L1358.0 591.0M1361.0 576.0L1473.0 575.0M1362.0 589.0L1473.0 578.0M1384.0 591.0L1473.0 580.0M1330.0 521.0L1346.5 511.0M1331.5 528.5L1354.0 518.5M1334.0 536.0L1361.5 521.0M1344.0 538.0L1362.0 531.0M1364.0 531.0L1474.0 548.0M1366.0 536.0L1475.0 556.0" fill="none" stroke="#3399ff" stroke-width="1" opacity="0.9"/><path d="M184.6 270.4L447.6 292.1M184.6 270.4L114.2 350.2M184.6 270.4L200.3 298.6M200.3 298.6L214.4 333.3M214.4 333.3L225.3 377.6M225.3 377.6L231.5 406.6M114.2 350.2L141.6 381.5M141.6 381.5L171.5 405.4M114.2 350.2L200.3 298.6M114.2 350.2L214.4 333.3M141.6 381.5L214.4 333.3M171.5 405.4L214.4 333.3M171.5 405.4L225.3 377.6M171.5 405.4L231.5 406.6M200.3 298.6L447.6 292.1M200.3 298.6L415.9 333.2M214.4 333.3L415.9 333.2M214.4 333.3L395.4 380.7M225.3 377.6L395.4 380.7M231.5 406.6L395.4 380.7M231.5 406.6L385.5 417.8M231.5 406.6L374.0 453.5M171.5 405.4L374.0 453.5M395.4 380.7L385.5 417.8M385.5 417.8L374.0 453.5M447.6 292.1L509.4 284.3M447.6 292.1L415.9 333.2M415.9 333.2L509.4 284.3M415.9 333.2L395.4 380.7M415.9 333.2L579.3 428.5M415.9 333.2L589.2 396.0M395.4 380.7L579.3 428.5M509.4 284.3L610.4 344.5M509.4 284.3L600.6 368.1M509.4 284.3L589.2 396.0M610.4 344.5L600.6 368.1M600.6 368.1L589.2 396.0M589.2 396.0L579.3 428.5M395.4 380.7L566.6 456.4M385.5 417.8L566.6 456.4M385.5 417.8L554.3 489.3M374.0 453.5L554.3 489.3M579.3 428.5L566.6 456.4M566.6 456.4L554.3 489.3M509.4 284.3L905.0 421.1M610.4 344.5L905.0 421.1M610.4 344.5L784.7 411.8M600.6 368.1L784.7 411.8M600.6 368.1L771.6 447.0M589.2 396.0L771.6 447.0M589.2 396.0L762.5 475.8M579.3 428.5L762.5 475.8M579.3 428.5L752.4 517.0M566.6 456.4L752.4 517.0M554.3 489.3L752.4 517.0M554.3 489.3L754.0 567.3M784.7 411.8L771.6 447.0M771.6 447.0L762.5 475.8M762.5 475.8L752.4 517.0M752.4 517.0L754.0 567.3M784.7 411.8L905.0 421.1M784.7 411.8L891.5 462.8M771.6 447.0L891.5 462.8M762.5 475.8L891.5 462.8M762.5 475.8L898.4 513.0M752.4 517.0L898.4 513.0M752.4 517.0L895.3 545.0M754.0 567.3L895.3 545.0M754.0 567.3L893.0 588.7M905.0 421.1L891.5 462.8M905.0 421.1L898.6 467.0M891.5 462.8L898.6 467.0M898.6 467.0L899.3 482.5M891.5 462.8L898.4 513.0M898.6 467.0L952.8 435.1M898.6 467.0L949.6 478.4M899.3 482.5L949.6 478.4M899.3 482.5L946.9 515.7M905.0 421.1L952.8 435.1M952.8 435.1L949.6 478.4M949.6 478.4L946.9 515.7M898.4 513.0L946.9 515.7M898.4 513.0L895.3 545.0M898.4 513.0L943.8 545.4M946.9 515.7L943.8 545.4M946.9 515.7L1014.0 550.2M895.3 545.0L943.8 545.4M895.3 545.0L893.0 588.7M943.8 545.4L893.0 588.7M943.8 545.4L953.3 589.9M943.8 545.4L1014.0 550.2M893.0 588.7L953.3 589.9M893.0 588.7L1019.1 622.6M953.3 589.9L1019.1 622.6M953.3 589.9L1014.0 550.2M1014.0 550.2L1019.1 622.6M1014.0 550.2L1093.3 537.6M952.8 435.1L1093.3 537.6M952.8 435.1L1014.0 550.2M952.8 435.1L1137.6 482.6M949.6 478.4L1014.0 550.2M952.8 435.1L1328.8 486.9M1093.3 537.6L1137.6 482.6M1093.3 537.6L1137.6 499.3M1093.3 537.6L1135.6 526.2M1093.3 537.6L1129.0 567.5M1093.3 537.6L1129.0 592.7M1093.3 537.6L1019.1 622.6M1137.6 482.6L1137.6 499.3M1137.6 499.3L1135.6 526.2M1135.6 526.2L1129.0 567.5M1129.0 567.5L1129.0 592.7M1137.6 482.6L1328.8 486.9M1137.6 482.6L1227.4 570.8M1137.6 499.3L1227.4 570.8M1135.6 526.2L1227.4 570.8M1129.0 567.5L1227.4 570.8M1129.0 592.7L1227.4 570.8M1019.1 622.6L1129.0 592.7M1019.1 622.6L1324.2 596.4M1129.0 592.7L1324.2 596.4M1227.4 570.8L1328.8 486.9M1227.4 570.8L1327.5 503.8M1227.4 570.8L1324.2 537.1M1227.4 570.8L1324.9 571.6M1227.4 570.8L1324.2 596.4M1328.8 486.9L1362.0 487.5M1362.0 487.5L1473.6 503.2M1328.8 486.9L1327.5 503.8M1327.5 503.8L1324.2 537.1M1324.2 537.1L1324.9 571.6M1324.9 571.6L1324.2 596.4M1362.0 487.5L1364.0 503.2M1364.0 503.2L1361.4 539.0M1361.4 539.0L1360.7 580.8M1360.7 580.8L1357.5 595.1M1327.5 503.8L1364.0 503.2M1364.0 503.2L1473.6 503.2M1327.5 503.8L1362.0 487.5M1327.5 503.8L1361.4 539.0M1324.2 537.1L1361.4 539.0M1361.4 539.0L1473.6 503.2M1361.4 539.0L1477.5 544.9M1361.4 539.0L1472.9 576.9M1361.4 539.0L1324.9 571.6M1324.9 571.6L1360.7 580.8M1324.9 571.6L1357.5 595.1M1324.2 596.4L1357.5 595.1M1360.7 580.8L1472.9 576.9M1357.5 595.1L1472.9 576.9M1473.6 503.2L1477.5 544.9M1477.5 544.9L1472.9 576.9" fill="none" stroke="#808000" stroke-width="1.7"/><path d="M133.2 370.6L212.3 330.0L305.0 316.0L329.0 295.6L365.5 285.6M215.0 335.0L176.0 403.5L230.0 399.0L275.0 378.5L215.0 335.0M190.9 409.8L274.0 420.4L377.8 442.3L473.8 473.7M622.3 323.0L560.5 314.3L601.4 366.0L614.9 372.1L593.6 385.1L584.0 387.7L580.1 426.0L579.3 428.5L588.0 432.3M579.3 428.5L506.6 429.7L516.4 445.3L624.0 480.4L706.4 506.0L737.1 514.8L774.6 563.5L773.7 570.1M993.7 440.3L1015.2 451.0L989.8 461.8L950.1 451.9L915.7 456.2L900.7 451.6L879.9 457.5L877.9 460.8L764.4 467.3L728.0 461.4L727.3 466.7L761.8 484.3L851.8 514.3L896.6 535.1L903.1 544.9L898.6 584.0L921.4 589.3L950.7 604.3M894.0 468.2L916.2 479.9L929.2 502.7L899.2 491.0L894.0 468.2M956.6 546.4L1001.6 544.5L999.0 533.4L1047.9 545.8L1015.3 564.7L1001.0 557.5L956.6 546.4M1150.5 462.3L1194.9 483.8L1159.0 502.1L1144.0 530.1L1105.5 546.4L1129.6 584.9L1145.7 589.3L1168.2 593.5L1145.7 611.8M1304.0 483.6L1312.5 486.9L1198.8 543.2L1193.6 554.3L1165.5 568.6L1192.3 578.4L1295.7 596.0L1291.5 599.3M1438.3 499.3L1435.7 503.2L1366.6 519.5L1348.3 523.4L1328.8 537.1L1333.3 563.8L1360.7 565.1L1432.5 583.4M1476.2 535.1L1435.7 543.0L1476.2 554.0" fill="none" stroke="#0000ff" stroke-width="1.8" stroke-linejoin="round"/><path d="M184.6 266.4v5M114.2 346.2v5M141.6 377.5v5M171.5 401.4v5M200.3 294.6v5M214.4 329.3v5M225.3 373.6v5M231.5 402.6v5M447.6 288.1v5M509.4 280.3v5M415.9 329.2v5M395.4 376.7v5M385.5 413.8v5M374.0 449.5v5M610.4 340.5v5M600.6 364.1v5M589.2 392.0v5M579.3 424.5v5M566.6 452.4v5M554.3 485.3v5M784.7 407.8v5M771.6 443.0v5M762.5 471.8v5M752.4 513.0v5M754.0 563.3v5M905.0 417.1v5M891.5 458.8v5M898.6 463.0v5M899.3 478.5v5M952.8 431.1v5M949.6 474.4v5M898.4 509.0v5M946.9 511.7v5M895.3 541.0v5M943.8 541.4v5M1014.0 546.2v5M893.0 584.7v5M953.3 585.9v5M1019.1 618.6v5M1093.3 533.6v5M1137.6 478.6v5M1137.6 495.3v5M1135.6 522.2v5M1129.0 563.5v5M1129.0 588.7v5M1227.4 566.8v5M1328.8 482.9v5M1362.0 483.5v5M1327.5 499.8v5M1364.0 499.2v5M1473.6 499.2v5M1324.2 533.1v5M1361.4 535.0v5M1477.5 540.9v5M1324.9 567.6v5M1360.7 576.8v5M1472.9 572.9v5M1324.2 592.4v5M1357.5 591.1v5" stroke="#ff6060" stroke-width="0.8" opacity="0.6"/><text x="184.2" y="289.2" font-size="19" fill="#ff0000">L</text><text x="200.1" y="317.7" font-size="19" fill="#ff0000">L</text><text x="114.5" y="369.0" font-size="19" fill="#ff0000">LUS</text><text x="141.8" y="398.7" font-size="19" fill="#ff0000">CLUS</text><text x="171.6" y="423.7" font-size="19" fill="#ff0000">RUS</text><text x="214.8" y="351.8" font-size="19" fill="#ff0000">TBM2</text><text x="214.8" y="351.8" font-size="19" fill="#ff0000" textLength="42.4" lengthAdjust="spacingAndGlyphs">1000</text><text x="226.5" y="395.6" font-size="19" fill="#ff0000">R</text><text x="232.0" y="423.8" font-size="19" fill="#ff0000">R</text><text x="448.0" y="310.7" font-size="19" fill="#ff0000">L</text><text x="508.9" y="302.0" font-size="19" fill="#ff0000">GOT</text><text x="415.8" y="351.5" font-size="19" fill="#ff0000">L</text><text x="396.7" y="398.5" font-size="19" fill="#ff0000" textLength="42.4" lengthAdjust="spacingAndGlyphs">1100</text><text x="385.4" y="436.8" font-size="19" fill="#ff0000">R</text><text x="374.0" y="472.2" font-size="19" fill="#ff0000">R</text><text x="611.1" y="362.8" font-size="19" fill="#ff0000">L</text><text x="600.6" y="386.8" font-size="19" fill="#ff0000">L</text><text x="590.6" y="413.7" font-size="19" fill="#ff0000">L</text><text x="579.8" y="448.1" font-size="19" fill="#ff0000" textLength="42.4" lengthAdjust="spacingAndGlyphs">1200</text><text x="568.0" y="474.8" font-size="19" fill="#ff0000">R</text><text x="555.0" y="508.1" font-size="19" fill="#ff0000">R</text><text x="784.1" y="430.2" font-size="19" fill="#ff0000">L</text><text x="772.4" y="466.1" font-size="19" fill="#ff0000">L</text><text x="763.8" y="494.8" font-size="19" fill="#ff0000" textLength="42.4" lengthAdjust="spacingAndGlyphs">1300</text><text x="752.8" y="535.9" font-size="19" fill="#ff0000">R</text><text x="754.7" y="585.4" font-size="19" fill="#ff0000">R</text><text x="905.8" y="439.6" font-size="19" fill="#ff0000">L</text><text x="952.8" y="453.3" font-size="19" fill="#ff0000">L</text><text x="892.8" y="480.7" font-size="19" fill="#ff0000">GOT</text><text x="900.0" y="499.6" font-size="19" fill="#ff0000">L</text><text x="949.5" y="495.7" font-size="19" fill="#ff0000">L</text><text x="900.0" y="531.5" font-size="19" fill="#ff0000" textLength="42.4" lengthAdjust="spacingAndGlyphs">1375</text><text x="948.2" y="533.5" font-size="19" fill="#ff0000" textLength="42.4" lengthAdjust="spacingAndGlyphs">1400</text><text x="895.8" y="562.5" font-size="19" fill="#ff0000">R</text><text x="944.8" y="563.9" font-size="19" fill="#ff0000">R</text><text x="1014.8" y="568.5" font-size="19" fill="#ff0000">PL</text><text x="892.8" y="607.0" font-size="19" fill="#ff0000">R</text><text x="953.4" y="608.3" font-size="19" fill="#ff0000">R</text><text x="1018.7" y="640.9" font-size="19" fill="#ff0000">TBM1</text><text x="1093.8" y="555.7" font-size="19" fill="#ff0000">GOT</text><text x="1138.2" y="501.5" font-size="19" fill="#ff0000">L</text><text x="1138.2" y="516.5" font-size="19" fill="#ff0000">L</text><text x="1136.3" y="543.9" font-size="19" fill="#ff0000" textLength="42.4" lengthAdjust="spacingAndGlyphs">1500</text><text x="1129.8" y="587.0" font-size="19" fill="#ff0000">R</text><text x="1129.5" y="611.8" font-size="19" fill="#ff0000">R</text><text x="1228.2" y="589.5" font-size="19" fill="#ff0000">BRTR</text><text x="1329.5" y="505.9" font-size="19" fill="#ff0000">L</text><text x="1363.8" y="505.9" font-size="19" fill="#ff0000">L</text><text x="1328.3" y="522.8" font-size="19" fill="#ff0000">L</text><text x="1364.8" y="520.2" font-size="19" fill="#ff0000">L</text><text x="1473.7" y="522.2" font-size="19" fill="#ff0000">LDS</text><text x="1325.6" y="556.8" font-size="19" fill="#ff0000" textLength="42.4" lengthAdjust="spacingAndGlyphs">1600</text><text x="1362.8" y="557.5" font-size="19" fill="#ff0000" textLength="42.4" lengthAdjust="spacingAndGlyphs">1620</text><text x="1476.9" y="563.9" font-size="19" fill="#ff0000">CLDS</text><text x="1325.6" y="590.0" font-size="19" fill="#ff0000">R</text><text x="1360.8" y="598.5" font-size="19" fill="#ff0000">R</text><text x="1324.3" y="614.8" font-size="19" fill="#ff0000">R</text><text x="1357.6" y="613.5" font-size="19" fill="#ff0000">R</text><text x="1473.0" y="595.2" font-size="19" fill="#ff0000">RDS</text></svg>
<svg style="left:0;top:0" width="960" height="60" viewBox="0 0 960 60"><defs><linearGradient id="qbg" x1="0" y1="0" x2="0" y2="1"><stop offset="0" stop-color="#f2f4f8"/><stop offset="1" stop-color="#e6eaf0"/></linearGradient><linearGradient id="hl" x1="0" y1="0" x2="0" y2="1"><stop offset="0" stop-color="#fff8e6"/><stop offset="0.5" stop-color="#fff"/><stop offset="1" stop-color="#ffe9b0"/></linearGradient><radialGradient id="orbg" cx="0.5" cy="0.35" r="0.65"><stop offset="0" stop-color="#ffffff"/><stop offset="0.6" stop-color="#e9e9e9"/><stop offset="0.85" stop-color="#c4c4c4"/><stop offset="1" stop-color="#f4f4f4"/></radialGradient></defs><path d="M50 0H906A15 12.5 0 0 1 921 12.5A15 12.5 0 0 1 906 25H58.5A30 30 0 0 0 50 0z" fill="url(#qbg)" stroke="#b9c0ca" stroke-width="1"/><rect x="63" y="3" width="20" height="20" fill="#fbfcfd"/><rect x="89" y="3" width="20" height="20" fill="#fbfcfd"/><rect x="115" y="3" width="20" height="20" fill="#fbfcfd"/><rect x="351" y="3" width="20" height="20" fill="#fbfcfd"/><rect x="377" y="3" width="20" height="20" fill="#fbfcfd"/><rect x="432" y="3" width="20" height="20" fill="#fbfcfd"/><rect x="459" y="3" width="20" height="20" fill="#fbfcfd"/><rect x="485" y="3" width="20" height="20" fill="#fbfcfd"/><rect x="511" y="3" width="20" height="20" fill="#fbfcfd"/><rect x="563" y="3" width="20" height="20" fill="#fbfcfd"/><rect x="640" y="3" width="21" height="20" fill="#fbfcfd"/><rect x="667" y="3" width="20" height="20" fill="#fbfcfd"/><rect x="723" y="3" width="20" height="20" fill="#fbfcfd"/><rect x="749" y="3" width="20" height="20" fill="#fbfcfd"/><rect x="779" y="3" width="20" height="20" fill="#fbfcfd"/><rect x="805" y="3" width="20" height="20" fill="#fbfcfd"/><rect x="835" y="3" width="20" height="20" fill="#fbfcfd"/><rect x="861" y="3" width="20" height="20" fill="#fbfcfd"/><rect x="890" y="3" width="21" height="20" fill="#fbfcfd"/><rect x="405.0" y="0.5" width="24.0" height="24" rx="2.5" fill="url(#hl)" stroke="#d9a44e" stroke-width="1.6"/><rect x="535.0" y="0.5" width="23.5" height="24" rx="2.5" fill="url(#hl)" stroke="#d9a44e" stroke-width="1.6"/><rect x="587.0" y="0.5" width="23.5" height="24" rx="2.5" fill="url(#hl)" stroke="#d9a44e" stroke-width="1.6"/><rect x="613.0" y="0.5" width="23.5" height="24" rx="2.5" fill="url(#hl)" stroke="#d9a44e" stroke-width="1.6"/><rect x="691.5" y="0.5" width="23.5" height="24" rx="2.5" fill="url(#hl)" stroke="#d9a44e" stroke-width="1.6"/><path d="M140.5 3V22" stroke="#5f6670" stroke-width="1"/><path d="M402.5 3V22" stroke="#5f6670" stroke-width="1"/><path d="M718.5 3V22" stroke="#5f6670" stroke-width="1"/><path d="M774.5 3V22" stroke="#5f6670" stroke-width="1"/><path d="M830.5 3V22" stroke="#5f6670" stroke-width="1"/><path d="M886.5 3V22" stroke="#5f6670" stroke-width="1"/><path d="M67.5 4.5h9l4 4v14h-13z" fill="#fff" stroke="#5a7090" stroke-width="1.2"/><path d="M76.5 4.5v4h4" fill="#c8d4e4" stroke="#5a7090" stroke-width="1"/><path d="M68 21.5h12.5" stroke="#3d4d66" stroke-width="1.5"/><path d="M89.5 10v11.5h15l3-9h-15z" fill="#f6c74e" stroke="#8a6a20" stroke-width="0.9"/><path d="M89.5 21V8h5l1.5 2h5v2.5" fill="#f0d078" stroke="#8a6a20" stroke-width="0.9"/><path d="M99 6c2-3 6-3 8 0" fill="none" stroke="#3a6ab0" stroke-width="1.3"/><path d="M106 4l2 3-3 .5z" fill="#3a6ab0"/><path d="M118 7l13 13M131 7l-13 13" stroke="#202020" stroke-width="1.8"/><rect x="143.5" y="2.5" width="204" height="21" fill="#fff" stroke="#e4e8ee"/><path d="M334 10.5h6l-3 3.5z" fill="#8a8f96"/><path d="M347.5 1V25" stroke="#c3c9d1"/><path d="M355 18c3 3 5-1 7-4s4-7 8-9" fill="none" stroke="#222" stroke-width="1.4"/><path d="M353 5l6 6M359 5l-6 6M356 4v8M352 8h8" stroke="#111" stroke-width="1.1"/><rect x="379" y="4.0" width="5" height="1.6" fill="#e04040"/><rect x="379" y="6.6" width="5" height="1.6" fill="#f08080"/><rect x="379" y="9.2" width="5" height="1.6" fill="#e0e040"/><rect x="379" y="11.8" width="5" height="1.6" fill="#40c040"/><rect x="379" y="14.4" width="5" height="1.6" fill="#40e0e0"/><rect x="379" y="17.0" width="5" height="1.6" fill="#2040ff"/><path d="M381 20c3 0 5-3 8-6s4-6 7-9" fill="none" stroke="#222" stroke-width="1.4"/><path d="M410 7h6M413 4v6M420 8h6M423 5v6M414 15h6M417 12v6" stroke="#111" stroke-width="1.6"/><text x="434" y="13" font-family="Liberation Sans" font-weight="bold" font-size="7.5" fill="#333">1</text><text x="445" y="13" font-family="Liberation Sans" font-weight="bold" font-size="7.5" fill="#333">3</text><text x="439" y="21" font-family="Liberation Sans" font-weight="bold" font-size="7.5" fill="#333">2</text><path d="M464 3.5h8M464 22h8M466 5v15" stroke="#222" stroke-width="1.3"/><path d="M463.5 8l2.5-3 2.5 3M463.5 17l2.5 3 2.5-3" fill="none" stroke="#222" stroke-width="1.3"/><text x="469" y="18" font-family="Liberation Sans" font-weight="bold" font-size="8.5" fill="#222">h</text><path d="M490 3.5h8M490 22h8M492 5v15" stroke="#222" stroke-width="1.3"/><path d="M489.5 8l2.5-3 2.5 3M489.5 17l2.5 3 2.5-3" fill="none" stroke="#222" stroke-width="1.3"/><text x="495" y="18" font-family="Liberation Sans" font-weight="bold" font-size="8.5" fill="#222">dh</text><path d="M516 3.5h8M516 22h8M518 5v15" stroke="#222" stroke-width="1.3"/><path d="M515.5 8l2.5-3 2.5 3M515.5 17l2.5 3 2.5-3" fill="none" stroke="#222" stroke-width="1.3"/><text x="521" y="18" font-family="Liberation Sans" font-weight="bold" font-size="8.5" fill="#222">h</text><path d="M519.5 12.5l2-2.5 2 2.5z" fill="#222"/><text x="546.5" y="12" text-anchor="middle" font-family="Liberation Sans" font-weight="bold" font-size="7" fill="#3a4a6a" letter-spacing="1.2">CO</text><text x="546.5" y="20" text-anchor="middle" font-family="Liberation Sans" font-weight="bold" font-size="7" fill="#3a4a6a" letter-spacing="1.2">DE</text><text x="573" y="12" text-anchor="middle" font-family="Liberation Sans" font-weight="bold" font-size="7" fill="#3a4a6a" letter-spacing="1.2">DE</text><text x="573" y="20" text-anchor="middle" font-family="Liberation Sans" font-weight="bold" font-size="7" fill="#3a4a6a" letter-spacing="1.2">SC</text><path d="M593 11l3-4 3 4zM601 15l3-4 3 4zM592 21l3-4 3 4z" fill="none" stroke="#111" stroke-width="1.3"/><path d="M618 6c8 0 13 4 15 9M618 10c6 0 10 3 12 8M619 14c4 0 7 3 8 6" fill="none" stroke="#222" stroke-width="1.4"/><path d="M643 21c4-3 1-8 5-11s3-5 2-6M650 21c4-3 1-8 5-11s3-5 2-6" fill="none" stroke="#1e90ff" stroke-width="1.6"/><path d="M669 11c2 8 14 8 16 0" fill="none" stroke="#111" stroke-width="2"/><path d="M672 13c2 3 8 3 10 0z" fill="#1060ff"/><rect x="694" y="3" width="18" height="19" fill="#35a8ff"/><path d="M694 15c4-3 8-4 12-3s6 1 6 1v9h-18z" fill="#20d020"/><path d="M694 18c5-2 10-2 18 0v4h-18z" fill="#186a18"/><ellipse cx="704" cy="7" rx="4" ry="1.8" fill="#fff"/><rect x="730.5" y="10.5" width="5" height="5" fill="none" stroke="#222" stroke-width="1.2"/><path d="M726 6l3 3M740 6l-3 3M726 20l3-3M740 20l-3-3M726 6h3M726 6v3M740 6h-3M740 6v3M726 20h3M726 20v-3M740 20h-3M740 20v-3" stroke="#222" stroke-width="1.3"/><circle cx="756.5" cy="9.5" r="4.5" fill="none" stroke="#222" stroke-width="1.5"/><path d="M760 13l5 5" stroke="#222" stroke-width="2"/><path d="M754 9.5h5M756.5 7v5" stroke="#222" stroke-width="1.1"/><path d="M782 11l7-7M783 20l13-13M790 20l6-6" stroke="#333" stroke-width="2.2"/><path d="M806 14l9-8 9 8v7h-18z" fill="none" stroke="#333" stroke-width="1.5"/><rect x="811" y="13" width="8" height="2.5" fill="none" stroke="#333" stroke-width="1.1"/><rect x="811" y="17" width="8" height="2.5" fill="none" stroke="#333" stroke-width="1.1"/><path d="M837 10v11h16V10" fill="none" stroke="#111" stroke-width="1.8"/><path d="M845 4v10M841 10l4 5 4-5z" stroke="#111" stroke-width="2" fill="#111"/><path d="M863 11v10h16V11" fill="none" stroke="#111" stroke-width="1.8"/><path d="M871 16V6M867 9l4-5 4 5z" stroke="#111" stroke-width="2" fill="#111"/><path d="M893 19c3-2 5 1 8 0s4 2 7 0" fill="none" stroke="#222" stroke-width="1.2"/><path d="M895 9l4 6 4-4" fill="none" stroke="#222" stroke-width="1.2"/><path d="M904 9l2-4 2 4z" fill="#222"/><path d="M933 9.5h7M933 12h7l-3.5 4z" fill="#777" stroke="#777" stroke-width="0.9"/><circle cx="28.5" cy="24.5" r="23" fill="url(#orbg)" stroke="#9c9c9c" stroke-width="1.3"/><circle cx="28.5" cy="24.5" r="20.5" fill="none" stroke="#ffffff" stroke-width="1" opacity="0.7"/><g transform="translate(15 13)"><rect width="26" height="26" fill="#ff0000"/><rect x="2.5" width="4.4" height="26" fill="#ff8a8a"/><rect x="6.9" width="6.8" height="26" fill="#ff7f40"/><path d="M13.7 0h5v26h-7.5z" fill="#00ff00"/><path d="M18.7 0h4.5l-3 26h-3.3z" fill="#80ff80"/><path d="M23.2 0h2.8v26h-6.5z" fill="#00ffff"/><path d="M0 8.5l21 6v3l-21-6z" fill="#00ff40" opacity="0.9"/><path d="M0 11l26 14v1h-4l-22-12z" fill="#00ffff"/><path d="M9.5 14.5l16.5 3.5v8z" fill="#0000ff"/></g></svg>
</body></html>
